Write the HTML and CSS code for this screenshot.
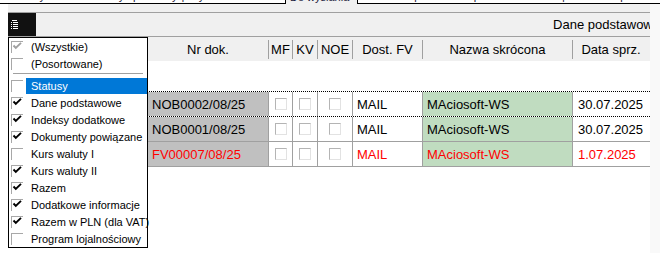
FILE: index.html
```html
<!DOCTYPE html>
<html lang="pl">
<head>
    <meta charset="UTF-8">
    <title>Dokumenty sprzedaży</title>
    <link rel="stylesheet" href="styles.css">
</head>
<body>

    <!-- Zakładki (widoczny tylko dolny brzeg) -->
    <div class="tabs">
        <div class="tab tab-first"><span>Wszystkie dokumenty sprzedaży</span><span class="sep">|</span><span>Wystawione do KSeF</span></div>
        <div class="tab tab-active"><span>Do wysłania</span></div>
        <div class="tab tab-last"><span>Niezaakceptowane nieprzeterminowane</span><span class="sep">|</span><span>Niezaakceptowane przeterminowane</span></div>
    </div>

    <div class="main">
        <div class="panel">
            <div class="gap"></div>

            <div class="toolbar">
                <button class="menu-btn" type="button">
                    <svg width="7" height="10" viewBox="0 0 7 10">
                        <g fill="#fff">
                            <rect x="1" y="0" width="5" height="1"/>
                            <rect x="0" y="2" width="1" height="1"/><rect x="2" y="2" width="5" height="1"/>
                            <rect x="0" y="4" width="1" height="1"/><rect x="2" y="4" width="5" height="1"/>
                            <rect x="0" y="6" width="1" height="1"/><rect x="2" y="6" width="5" height="1"/>
                            <rect x="0" y="8" width="1" height="1"/><rect x="2" y="8" width="5" height="1"/>
                        </g>
                    </svg>
                </button>
                <div class="view-name">Dane podstawowe</div>
            </div>

            <div class="grid-head">
                <div class="head-cell"></div>
                <div class="head-cell">Nr dok.</div>
                <div class="head-cell">MF</div>
                <div class="head-cell">KV</div>
                <div class="head-cell">NOE</div>
                <div class="head-cell">Dost. FV</div>
                <div class="head-cell">Nazwa skrócona</div>
                <div class="head-cell last">Data sprz.</div>
            </div>

            <div class="blank"></div>

            <div class="grid-row current">
                <div class="cell"></div>
                <div class="cell doc">NOB0002/08/25</div>
                <div class="cell box"><span class="cbx"></span></div>
                <div class="cell box"><span class="cbx"></span></div>
                <div class="cell box"><span class="cbx"></span></div>
                <div class="cell">MAIL</div>
                <div class="cell name">MAciosoft-WS</div>
                <div class="cell date">30.07.2025</div>
            </div>
            <div class="grid-row">
                <div class="cell"></div>
                <div class="cell doc">NOB0001/08/25</div>
                <div class="cell box"><span class="cbx"></span></div>
                <div class="cell box"><span class="cbx"></span></div>
                <div class="cell box"><span class="cbx"></span></div>
                <div class="cell">MAIL</div>
                <div class="cell name">MAciosoft-WS</div>
                <div class="cell date">30.07.2025</div>
            </div>
            <div class="grid-row overdue">
                <div class="cell"></div>
                <div class="cell doc">FV00007/08/25</div>
                <div class="cell box"><span class="cbx"></span></div>
                <div class="cell box"><span class="cbx"></span></div>
                <div class="cell box"><span class="cbx"></span></div>
                <div class="cell">MAIL</div>
                <div class="cell name">MAciosoft-WS</div>
                <div class="cell date">1.07.2025</div>
            </div>
        </div>
        <div class="edge"></div>
    </div>

    <!-- Menu wyboru kolumn -->
    <div class="columns-menu">
        <div class="menu-item disabled"><span class="mcheck"><svg width="11" height="11" viewBox="0 0 11 11"><polyline points="1.5,3.5 3.8,6 9,0.8"/></svg></span><span class="menu-label">(Wszystkie)</span></div>
        <div class="menu-item"><span class="mcheck"></span><span class="menu-label">(Posortowane)</span></div>
        <div class="menu-sep"></div>
        <div class="menu-item selected"><span class="mcheck"></span><span class="menu-label">Statusy</span></div>
        <div class="menu-item"><span class="mcheck"><svg width="11" height="11" viewBox="0 0 11 11"><polyline points="1.5,3.5 3.8,6 9,0.8"/></svg></span><span class="menu-label">Dane podstawowe</span></div>
        <div class="menu-item"><span class="mcheck"><svg width="11" height="11" viewBox="0 0 11 11"><polyline points="1.5,3.5 3.8,6 9,0.8"/></svg></span><span class="menu-label">Indeksy dodatkowe</span></div>
        <div class="menu-item"><span class="mcheck"><svg width="11" height="11" viewBox="0 0 11 11"><polyline points="1.5,3.5 3.8,6 9,0.8"/></svg></span><span class="menu-label">Dokumenty powiązane</span></div>
        <div class="menu-item"><span class="mcheck"></span><span class="menu-label">Kurs waluty I</span></div>
        <div class="menu-item"><span class="mcheck"><svg width="11" height="11" viewBox="0 0 11 11"><polyline points="1.5,3.5 3.8,6 9,0.8"/></svg></span><span class="menu-label">Kurs waluty II</span></div>
        <div class="menu-item"><span class="mcheck"><svg width="11" height="11" viewBox="0 0 11 11"><polyline points="1.5,3.5 3.8,6 9,0.8"/></svg></span><span class="menu-label">Razem</span></div>
        <div class="menu-item"><span class="mcheck"><svg width="11" height="11" viewBox="0 0 11 11"><polyline points="1.5,3.5 3.8,6 9,0.8"/></svg></span><span class="menu-label">Dodatkowe informacje</span></div>
        <div class="menu-item"><span class="mcheck"><svg width="11" height="11" viewBox="0 0 11 11"><polyline points="1.5,3.5 3.8,6 9,0.8"/></svg></span><span class="menu-label">Razem w PLN (dla VAT)</span></div>
        <div class="menu-item"><span class="mcheck"></span><span class="menu-label">Program lojalnościowy</span></div>
    </div>

</body>
</html>
```

FILE: styles.css
```css
body {
    margin: 0;
    width: 660px;
    height: 253px;
    overflow: hidden;
    position: relative;
    background-color: #fff;
    font-family: "Liberation Sans", Arial, sans-serif;
    color: #000;
}

/* Tabs strip - only the bottom edge is visible */
.tabs {
    display: flex;
    height: 4px;
    background-color: #f0f0f0;
}
.tab {
    display: flex;
    align-items: flex-end;
    box-sizing: border-box;
    height: 4px;
    overflow: hidden;
    white-space: nowrap;
    font-size: 11px;
    color: #1c1c3c;
}
.tab span {
    line-height: 13px;
}
.tab .sep {
    margin: 0 4px;
}
.tab-first {
    width: 286px;
    padding-left: 18px;
    background-color: #fff;
    border-right: 1px solid #000;
    border-bottom: 1px solid #000;
}
.tab-active {
    width: 71px;
    padding-left: 4px;
}
.tab-last {
    flex: 1;
    padding-left: 5px;
    background-color: #fff;
    border-left: 1px solid #000;
    border-bottom: 1px solid #000;
}

.main {
    display: flex;
    height: 249px;
}
.panel {
    margin-left: 8px;
    width: 642px;
    background-color: #fff;
    overflow: hidden;
}
.edge {
    flex: 1;
    background-color: #f9f9f9;
}

.gap {
    height: 9px;
    box-sizing: border-box;
    background-color: #f0f0f0;
    border-bottom: 1px solid #a0a0a0;
}

/* Toolbar */
.toolbar {
    display: flex;
    height: 24px;
    box-sizing: border-box;
    background-color: #f0f0f0;
    border-bottom: 1px solid #a0a0a0;
    overflow: hidden;
}
.menu-btn {
    width: 28px;
    height: 23px;
    border: none;
    padding: 0 0 0 3px;
    background-color: #111;
    display: flex;
    align-items: center;
}
.menu-btn svg {
    display: block;
}
.view-name {
    margin-left: auto;
    margin-right: -10px;
    font-size: 13px;
    line-height: 23px;
    white-space: nowrap;
}

/* Grid */
.grid-head,
.grid-row {
    display: grid;
    grid-template-columns: 140px 121px 24px 25px 35px 70px 150px 76px;
    font-size: 13px;
}
.grid-head {
    height: 24px;
    align-items: center;
    background-color: #f0f0f0;
}
.head-cell {
    height: 19px;
    box-sizing: border-box;
    border-right: 1px solid #a0a0a0;
    display: flex;
    align-items: center;
    justify-content: center;
    white-space: nowrap;
    overflow: hidden;
}
.head-cell.last {
    border-right: none;
}
.blank {
    height: 30px;
}
.grid-row {
    height: 25px;
    box-sizing: border-box;
    border-bottom: 1px solid #a0a0a0;
}
.grid-row.current {
    height: 26px;
    border-top: 1px dotted #000;
    border-bottom: 1px dotted #000;
}
.grid-row.overdue {
    color: #f00;
}
.cell {
    box-sizing: border-box;
    border-right: 1px solid #a0a0a0;
    padding-left: 4px;
    display: flex;
    align-items: center;
    white-space: nowrap;
    overflow: hidden;
}
.cell.doc {
    background-color: #c0c0c0;
}
.cell.name {
    background-color: #c0dcc0;
}
.cell.date {
    border-right: none;
    padding-left: 5px;
}
.cell.box {
    padding: 0;
    justify-content: center;
}
.cbx {
    width: 12px;
    height: 12px;
    box-sizing: border-box;
    border: 1px solid;
    border-color: #b4b4b4 #e2e2e2 #e2e2e2 #b4b4b4;
}

/* Column chooser menu */
.columns-menu {
    position: absolute;
    left: 8px;
    top: 37px;
    width: 140px;
    box-sizing: border-box;
    border: 1px solid #000;
    background-color: #fff;
    font-size: 11px;
}
.menu-item {
    display: flex;
    align-items: center;
    height: 17px;
}
.mcheck {
    width: 12px;
    height: 12px;
    margin-left: 2px;
    box-sizing: border-box;
    border-left: 1px solid #a8a8a8;
    border-top: 1px solid #a8a8a8;
}
.mcheck svg {
    display: block;
    overflow: visible;
}
.mcheck polyline {
    fill: none;
    stroke: #000;
    stroke-width: 1.9;
}
.menu-item.disabled polyline {
    stroke: #a0a0a0;
}
.menu-label {
    flex: 1;
    align-self: stretch;
    margin: 1px 0 0 3px;
    padding-left: 5px;
    display: flex;
    align-items: center;
    white-space: nowrap;
}
.menu-item.selected .menu-label {
    background-color: #0078d7;
    color: #fff;
}
.menu-sep {
    height: 5px;
    box-sizing: border-box;
    padding-top: 1px;
}
.menu-sep::before {
    content: "";
    display: block;
    height: 1px;
    margin: 0 4px 0 4px;
    background-color: #a0a0a0;
}
```
